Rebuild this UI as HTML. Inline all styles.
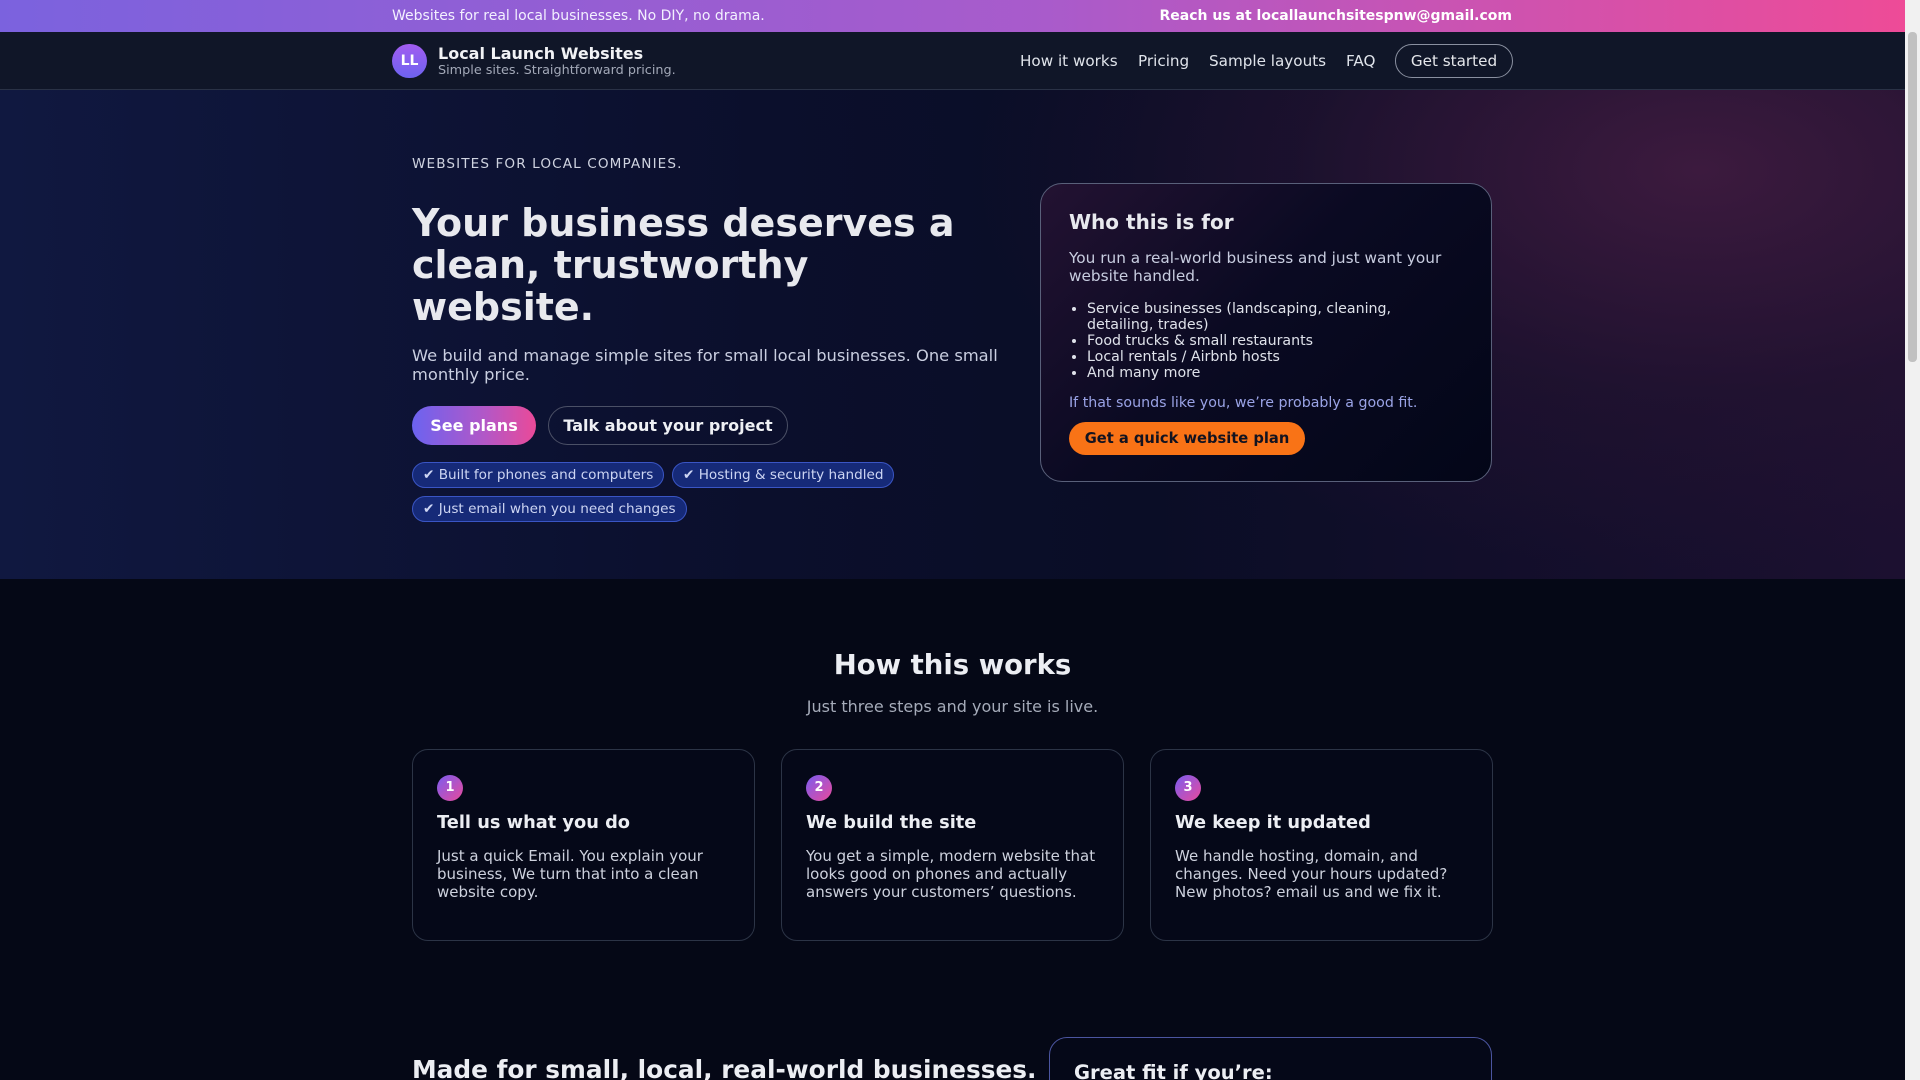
<!DOCTYPE html>
<html><head><meta charset="utf-8"><style>
*{box-sizing:border-box;margin:0;padding:0}
html,body{width:1920px;height:1080px;overflow:hidden}
body{background:#050816;font-family:"DejaVu Sans","Liberation Sans",sans-serif;color:#e5e7eb;position:relative}
.sb{position:absolute;right:0;top:0;width:15px;height:1080px;background:#f1f1f1}
.sb i{position:absolute;left:3px;right:3px;top:32px;height:330px;background:#c1c1c1;border-radius:4px}
.top{position:absolute;left:0;top:0;width:1905px;height:32px;background:linear-gradient(90deg,#7b62de,#a95bcb 55%,#ee4b97);font-size:14px;color:#f3f0ff}
.top .l{position:absolute;left:392px;top:8px}
.top .r{position:absolute;right:393px;top:8px;font-weight:bold;color:#fff}
.nav{position:absolute;left:0;top:32px;width:1905px;height:58px;background:#101628;border-bottom:1px solid #2a3246}
.logo{position:absolute;left:392px;top:12px;width:35px;height:34px;border-radius:17px;background:linear-gradient(180deg,#a25cf0,#6d63f0);color:#fff;font-weight:bold;font-size:14px;text-align:center;line-height:34px}
.bt{position:absolute;left:438px;top:12px;font-weight:bold;font-size:16px;color:#f1f2f5}
.bs{position:absolute;left:438px;top:31px;font-size:12.8px;color:#a3a9b8}
.nl{position:absolute;top:20px;font-size:15.2px;color:#dfe3ea}
.gs{position:absolute;left:1395px;top:12px;width:118px;height:34px;border:1px solid #8a90a0;border-radius:17px;font-size:15.2px;color:#e5e7eb;text-align:center;line-height:32px}
.hero{position:absolute;left:0;top:90px;width:1905px;height:489px;background:radial-gradient(ellipse 900px 500px at 1700px 80px,#3c1a3e 0%,rgba(40,20,50,.5) 45%,rgba(0,0,0,0) 80%),linear-gradient(90deg,#101840 0%,#0b0f2c 40%,#0a0d26 60%,#1c1030 100%)}
.eb{position:absolute;left:412px;top:66px;font-size:13.6px;letter-spacing:1.1px;color:#cfd3e0}
h1{position:absolute;left:412px;top:112px;font-size:38px;line-height:42px;font-weight:bold;color:#e8e9ee;width:570px}
.hp{position:absolute;left:412px;top:256px;font-size:16.3px;line-height:19px;color:#c9cee0;width:590px}
.b1{position:absolute;left:412px;top:316px;width:124px;height:39px;border-radius:20px;background:linear-gradient(90deg,#6c63f0,#b457c6 60%,#ea4a98);color:#fff;font-weight:bold;font-size:16px;text-align:center;line-height:39px}
.b2{position:absolute;left:548px;top:316px;width:240px;height:39px;border-radius:20px;border:1px solid #4b5066;color:#eef0f4;font-weight:bold;font-size:16px;text-align:center;line-height:37px}
.pill{position:absolute;height:26px;border-radius:13px;background:#162a78;border:1px solid #3a55c4;color:#cdd5f3;font-size:13.6px;line-height:24px;padding:0 10px}
.card{position:absolute;left:1040px;top:93px;width:452px;height:299px;border:1px solid #59607a;border-radius:22px;background:linear-gradient(135deg,#231232 0%,#0a0a22 45%,#030618 100%);padding:0 28px}
.card h3{position:absolute;left:28px;top:26px;font-size:20px;color:#e8e9ee}
.card .p{position:absolute;left:28px;top:65px;font-size:15.3px;line-height:18px;color:#c8cde0;width:400px}
.card ul{position:absolute;left:46px;top:117px;font-size:14.2px;line-height:16px;color:#dfe2ea;width:370px}
.card .f{position:absolute;left:28px;top:211px;font-size:14.2px;color:#9aa3e6}
.card .o{position:absolute;left:28px;top:238px;width:236px;height:33px;border-radius:17px;background:#f97316;color:#131320;font-weight:bold;font-size:14.7px;text-align:center;line-height:33px}
.h2{position:absolute;left:0;width:1905px;text-align:center}
.sc{position:absolute;top:749px;width:343px;height:192px;border:1px solid #2c3446;border-radius:16px;background:#050818}
.sc .n{position:absolute;left:24px;top:25px;width:26px;height:26px;border-radius:13px;background:linear-gradient(135deg,#7a5cf0,#e84a9c);color:#fff;font-size:13px;font-weight:bold;text-align:center;line-height:26px}
.sc h4{position:absolute;left:24px;top:62px;font-size:17.8px;color:#eceef3}
.sc p{position:absolute;left:24px;top:97px;width:300px;font-size:15px;line-height:18px;color:#cdd1dd}
</style></head><body>
<div class="top"><span class="l">Websites for real local businesses. No DIY, no drama.</span><span class="r">Reach us at locallaunchsitespnw@gmail.com</span></div>
<div class="nav">
<div class="logo">LL</div><div class="bt">Local Launch Websites</div><div class="bs">Simple sites. Straightforward pricing.</div>
<span class="nl" style="left:1020px">How it works</span><span class="nl" style="left:1138px">Pricing</span><span class="nl" style="left:1209px">Sample layouts</span><span class="nl" style="left:1346px">FAQ</span>
<div class="gs">Get started</div>
</div>
<div class="hero">
<div class="eb">WEBSITES FOR LOCAL COMPANIES.</div>
<h1>Your business deserves a clean, trustworthy website.</h1>
<div class="hp">We build and manage simple sites for small local businesses. One small monthly price.</div>
<div class="b1">See plans</div><div class="b2">Talk about your project</div>
<div class="pill" style="left:412px;top:372px">✔ Built for phones and computers</div>
<div class="pill" style="left:672px;top:372px">✔ Hosting &amp; security handled</div>
<div class="pill" style="left:412px;top:406px">✔ Just email when you need changes</div>
<div class="card">
<h3>Who this is for</h3>
<div class="p">You run a real-world business and just want your website handled.</div>
<ul><li>Service businesses (landscaping, cleaning, detailing, trades)</li><li>Food trucks &amp; small restaurants</li><li>Local rentals / Airbnb hosts</li><li>And many more</li></ul>
<div class="f">If that sounds like you, we’re probably a good fit.</div>
<div class="o">Get a quick website plan</div>
</div>
</div>
<div class="h2" style="top:649px;font-size:27.5px;font-weight:bold;color:#eceef3">How this works</div>
<div class="h2" style="top:697px;font-size:16px;color:#a5abb9">Just three steps and your site is live.</div>
<div class="sc" style="left:412px"><div class="n">1</div><h4>Tell us what you do</h4><p>Just a quick Email. You explain your business, We turn that into a clean website copy.</p></div>
<div class="sc" style="left:781px"><div class="n">2</div><h4>We build the site</h4><p>You get a simple, modern website that looks good on phones and actually answers your customers’ questions.</p></div>
<div class="sc" style="left:1150px"><div class="n">3</div><h4>We keep it updated</h4><p>We handle hosting, domain, and changes. Need your hours updated? New photos? email us and we fix it.</p></div>
<div style="position:absolute;left:412px;top:1055px;font-size:24.8px;font-weight:bold;color:#eceef3;white-space:nowrap">Made for small, local, real-world businesses.</div>
<div style="position:absolute;left:1049px;top:1037px;width:443px;height:80px;border:1px solid #4b55a0;border-radius:18px;background:#050818"><div style="position:absolute;left:24px;top:23px;font-size:19.5px;font-weight:bold;color:#eceef3">Great fit if you’re:</div></div>
<div class="sb"><i></i></div>
</body></html>
